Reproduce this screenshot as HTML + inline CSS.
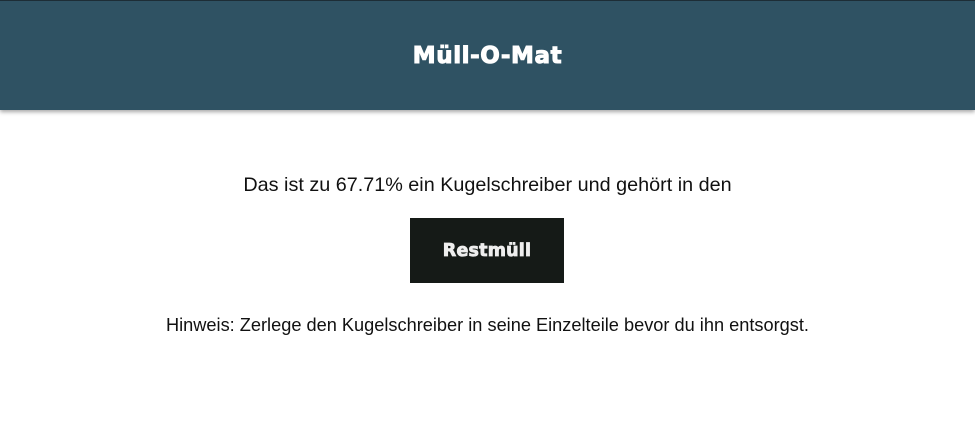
<!DOCTYPE html>
<html><head><meta charset="utf-8"><style>
html,body{margin:0;padding:0;width:975px;height:446px;background:#fff;overflow:hidden;font-family:"Liberation Sans",sans-serif;}
.hdr{position:absolute;left:0;top:0;width:975px;height:110px;background:#2f5263;border-top:1px solid #1d2d36;box-sizing:border-box;box-shadow:0 2px 4px rgba(0,0,0,0.35);}
.hdr h1{margin:0;position:absolute;left:0;right:0;top:42px;text-align:center;color:#fff;font-family:"DejaVu Sans",sans-serif;font-weight:900;font-size:23px;letter-spacing:0.6px;-webkit-text-stroke:1px #fff;}
.t1{position:absolute;left:0;right:0;top:174px;text-align:center;font-size:19.8px;color:#111;}
.btn{position:absolute;left:410px;top:218px;width:154px;height:65px;background:#151a17;color:#eee;font-family:"DejaVu Sans",sans-serif;font-weight:900;font-size:17.5px;text-align:center;line-height:67px;-webkit-text-stroke:0.8px #eee;letter-spacing:0.2px;}
.t2{position:absolute;left:0;right:0;top:315px;text-align:center;font-size:18.2px;color:#111;}
</style></head><body>
<div class="hdr"><h1>Müll-O-Mat</h1></div>
<div class="t1">Das ist zu 67.71% ein Kugelschreiber und gehört in den</div>
<div class="btn">Restmüll</div>
<div class="t2">Hinweis: Zerlege den Kugelschreiber in seine Einzelteile bevor du ihn entsorgst.</div>
</body></html>
